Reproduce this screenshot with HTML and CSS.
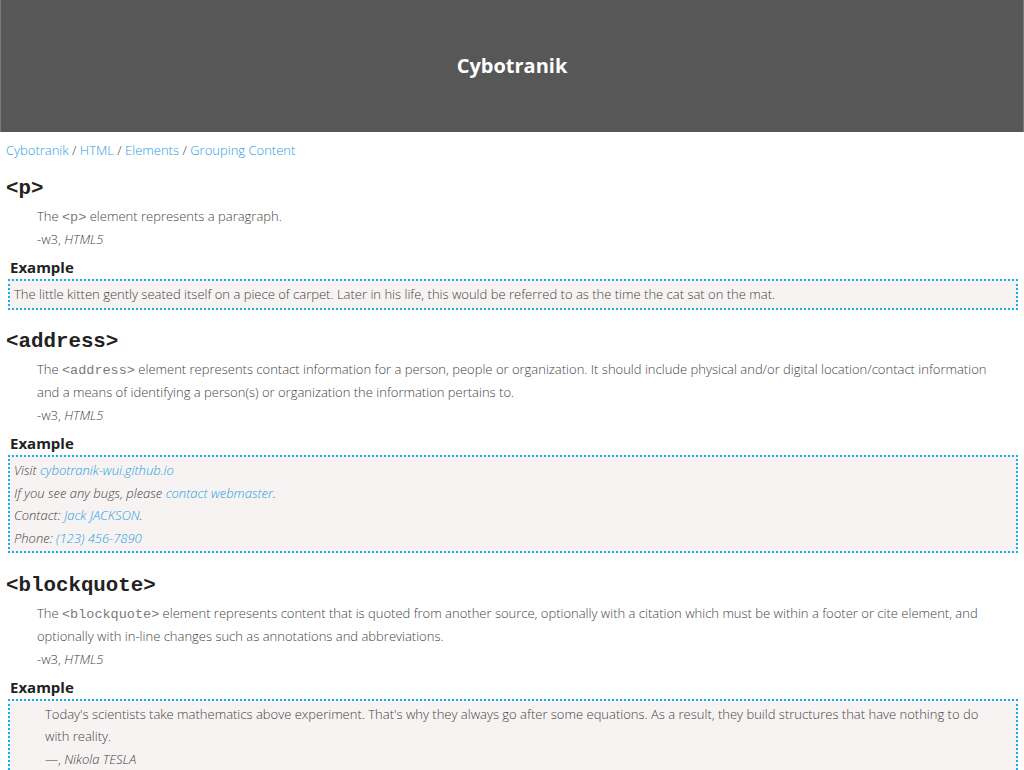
FILE: index.html
```html
<!DOCTYPE html>
<html lang="en">
<head>
<meta charset="utf-8">
<title>Grouping Content - Cybotranik</title>
<link rel="stylesheet" href="styles.css">
</head>
<body>
<header class="site-header">
  <h1 class="site-title">Cybotranik</h1>
</header>
<main class="content">
  <nav class="crumbs">
    <a href="#">Cybotranik</a> / <a href="#">HTML</a> / <a href="#">Elements</a> / <a href="#">Grouping Content</a>
  </nav>

  <section class="element">
    <h2 class="tag">&lt;p&gt;</h2>
    <div class="desc">
      <p>The <code>&lt;p&gt;</code> element represents a paragraph.</p>
      <p>-w3, <cite>HTML5</cite></p>
    </div>
    <h3 class="ex-title">Example</h3>
    <div class="example">
      <p>The little kitten gently seated itself on a piece of carpet. Later in his life, this would be referred to as the time the cat sat on the mat.</p>
    </div>
  </section>

  <section class="element">
    <h2 class="tag">&lt;address&gt;</h2>
    <div class="desc">
      <p>The <code>&lt;address&gt;</code> element represents contact information for a person, people or organization. It should include physical and/or digital location/contact information and a means of identifying a person(s) or organization the information pertains to.</p>
      <p>-w3, <cite>HTML5</cite></p>
    </div>
    <h3 class="ex-title">Example</h3>
    <div class="example">
      <address class="addr">
        Visit <a href="#">cybotranik-wui.github.io</a><br>
        If you see any bugs, please <a href="#">contact webmaster</a>.<br>
        Contact: <a href="#">Jack JACKSON</a>.<br>
        Phone: <a href="#">(123) 456-7890</a>
      </address>
    </div>
  </section>

  <section class="element">
    <h2 class="tag">&lt;blockquote&gt;</h2>
    <div class="desc">
      <p>The <code>&lt;blockquote&gt;</code> element represents content that is quoted from another source, optionally with a citation which must be within a footer or cite element, and optionally with in-line changes such as annotations and abbreviations.</p>
      <p>-w3, <cite>HTML5</cite></p>
    </div>
    <h3 class="ex-title">Example</h3>
    <div class="example">
      <blockquote class="quote">
        <p>Today's scientists take mathematics above experiment. That's why they always go after some equations. As a result, they build structures that have nothing to do with reality.</p>
        <footer>—, <cite>Nikola TESLA</cite></footer>
      </blockquote>
    </div>
  </section>
</main>
</body>
</html>
```

FILE: styles.css
```css
html, body {
  margin: 0;
  padding: 0;
  background: #ffffff;
}

body {
  font-family: "Open Sans", "Liberation Sans", sans-serif;
  font-weight: 300;
  font-size: 13px;
  color: #444444;
}

a {
  color: #1fa0e2;
  text-decoration: none;
}

.site-header {
  height: 132px;
  box-sizing: border-box;
  background: #575757;
  border-left: 1px solid #7a7a7a;
  border-right: 1px solid #7a7a7a;
  display: flex;
  align-items: center;
  justify-content: center;
}

.site-title {
  margin: 0;
  font-family: "Open Sans", "Liberation Sans", sans-serif;
  font-weight: 700;
  font-size: 20px;
  line-height: 28px;
  color: #ffffff;
}

.content {
  padding: 7px 6px 0 6px;
}

.crumbs {
  line-height: 22px;
  font-size: 13px;
  color: #444444;
}

.element {
  margin-top: 14px;
}

.element + .element {
  margin-top: 18.5px;
}

.tag {
  margin: 0;
  font-family: "Liberation Mono", "Courier New", monospace;
  font-weight: 700;
  font-size: 20.8px;
  line-height: 28px;
  color: #222222;
}

.desc {
  margin: 2px 12px 0 31px;
  line-height: 23px;
}

.desc p {
  margin: 0;
}

code {
  font-family: "Liberation Mono", "Courier New", monospace;
  font-size: 13.5px;
  font-weight: 400;
  line-height: 1;
  color: #7a7a7a;
}

cite {
  font-style: italic;
}

.ex-title {
  margin: 5px 0 0 0;
  padding-left: 4px;
  font-family: "Open Sans", "Liberation Sans", sans-serif;
  font-weight: 700;
  font-size: 15px;
  line-height: 22px;
  color: #222222;
}

.example {
  margin: 1px 0 0 2px;
  padding: 2px 4px;
  border: 2px dotted #19adef;
  background: #f6f3f2;
  line-height: 22.5px;
}

.example p {
  margin: 0;
}

.addr {
  font-style: italic;
}

.quote {
  margin: 0 31px;
}

.quote p {
  margin: 0;
}
```
